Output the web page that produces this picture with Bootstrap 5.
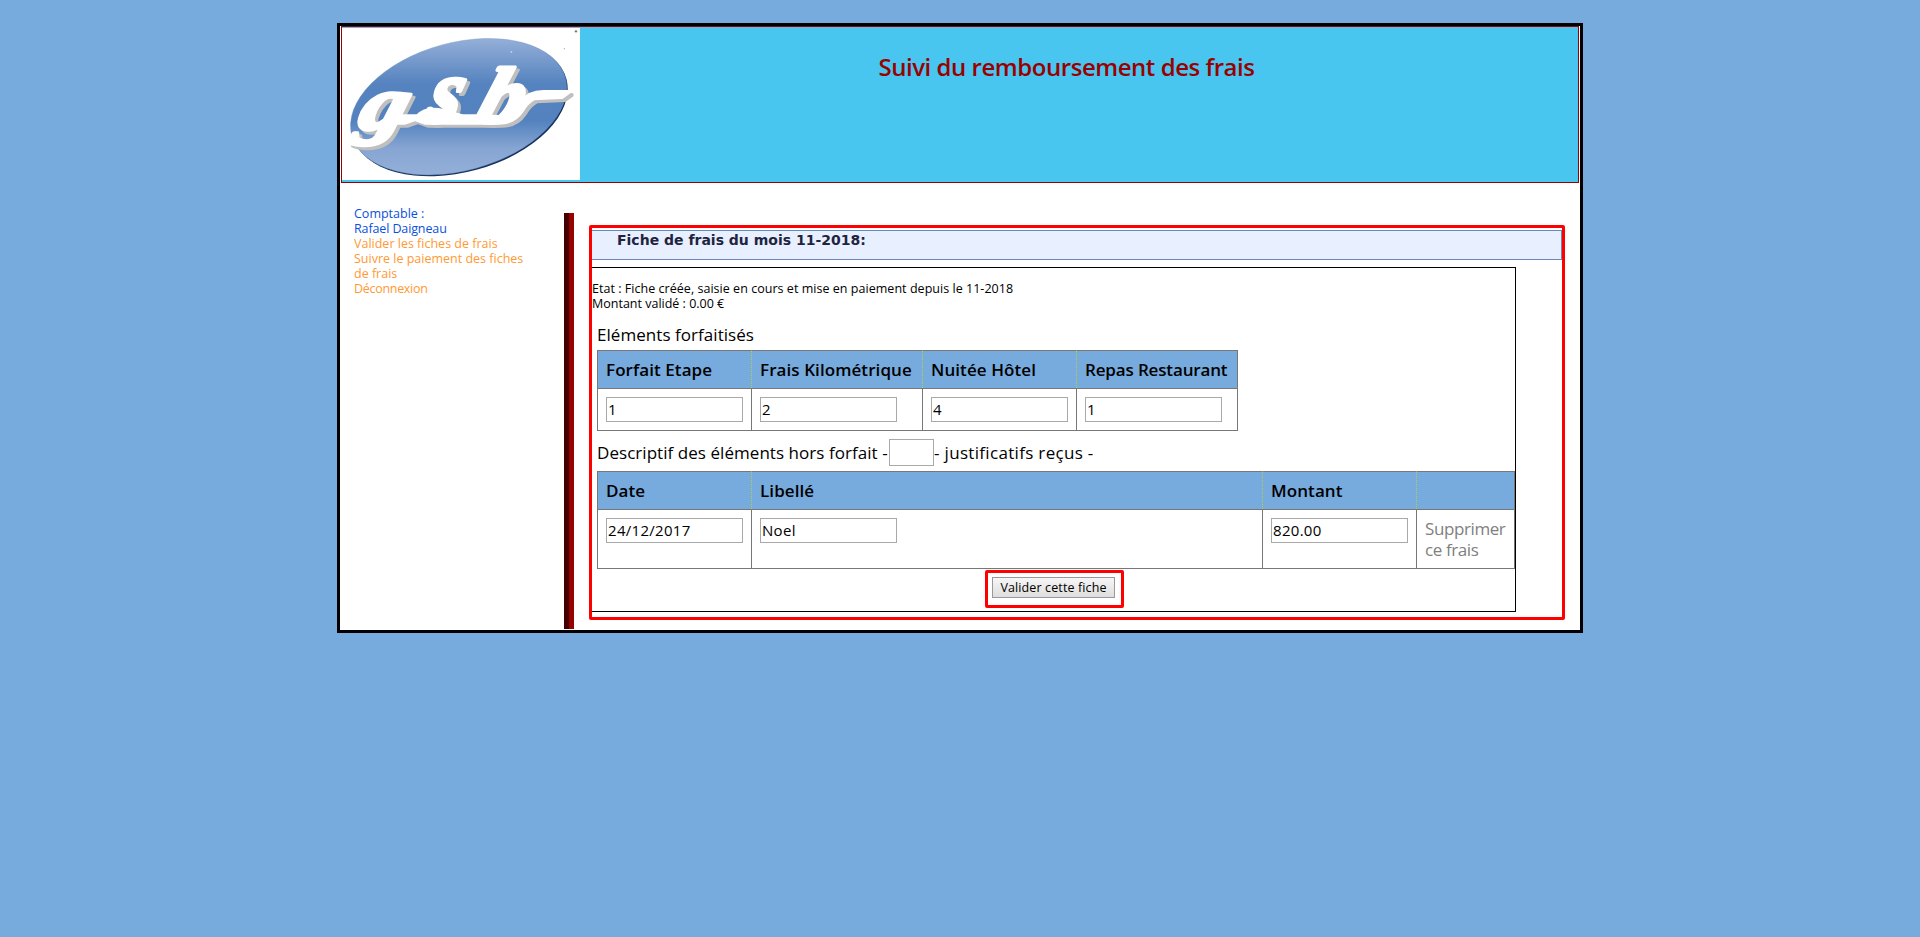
<!DOCTYPE html>
<html lang="fr">
<head>
<meta charset="utf-8">
<meta name="viewport" content="width=device-width, initial-scale=1">
<title>Suivi du remboursement des frais</title>
<link rel="stylesheet" href="https://cdn.jsdelivr.net/npm/bootstrap@5.3.0/dist/css/bootstrap.min.css">
<style>
  body { background: #77aadd; color: #000; font: 12.5px/15px "Open Sans", "Noto Sans", sans-serif; padding-top: 23px; }
  .page { width: 1246px; height: 610px; border: 3px solid #000; }
  .banner { height: 157px; margin: 0 1px; border: 1px solid #900; background: #48c6ef; }
  .logo { width: 238px; height: 152px; margin-top: 1px; }
  .banner h1 { margin: 25px 25px 0 0; font-size: 24px; line-height: 29px; font-weight: 600; letter-spacing: -.46px; color: #900; }
  .side { width: 210px; padding: 23px 30px 0 0; margin-left: 14px; color: #0a50dc; }
  .side a { color: #ff9933; }
  .divider { width: 10px; margin: 30px 15px 1px 0; background: linear-gradient(90deg, #430000 50%, #900 50%); }
  .framed { border: 3px solid #f00; border-radius: 2px; }
  .sheet { width: 976px; height: 395px; margin-top: 42px; }
  .sheet h2 { height: 30px; margin: 2px 0 7px; padding: 2px 0 0 25px; border: 1px solid #6b8abb; border-left: 0; background: #e8f0ff; color: #1f2440; font: bold 14px/15px "DejaVu Sans", sans-serif; }
  .panel { width: 924px; height: 345px; border: 1px solid #000; border-left: 0; padding-top: 13px; }
  .heading { font-size: 17px; margin-left: 5px; letter-spacing: .05px; }
  .grid { table-layout: fixed; border-collapse: separate; border-spacing: 0; margin-left: 5px; font-size: 17px; line-height: 21px; }
  .grid th { height: 38px; padding: 0 0 0 8px; font-weight: 600; letter-spacing: .08px; background: #77aadd; border-top: 1px solid #777; border-left: 1px dotted #b5cc46; white-space: nowrap; }
  .grid th:first-child { border-left: 1px solid #777; }
  .grid td { padding: 8px 0 8px 8px; vertical-align: top; border: 1px solid #777; border-right: 0; }
  .grid th:last-child, .grid td:last-child { border-right: 1px solid #777; }
  .grid input, .count { display: block; width: 137px; height: 25px; padding: 0 1px 2px; border: 1px solid #a9a9a9; background: #fff; color: #000; font-size: 15px; line-height: 21px; }
  .grid input { letter-spacing: .3px; }
  .tall td { height: 60px; padding-bottom: 0; }
  .count { width: 45px; height: 27px; }
  .submit { width: 139px; height: 38px; margin: 1px 0 0 393px; padding: 4px; }
  .submit button { display: block; width: 123px; height: 21px; padding: 0; border: 1px solid #999; background: linear-gradient(#f6f6f6, #dedede); color: #000; font-size: 12.5px; line-height: 18px; letter-spacing: .12px; }
</style>
</head>
<body>
<div class="page bg-white mx-auto">
  <header class="banner d-flex align-items-start">
    <svg class="logo flex-shrink-0" viewBox="36 39 714 456" preserveAspectRatio="none" role="img" aria-label="gsb">
      <defs>
        <linearGradient id="sky" gradientUnits="userSpaceOnUse" x1="386" y1="70" x2="386" y2="482" gradientTransform="rotate(15.2 386 276)">
          <stop offset="0" stop-color="#95afd8"/><stop offset=".33" stop-color="#5583bf"/><stop offset=".6" stop-color="#5382bf"/><stop offset=".8" stop-color="#86a5d2"/><stop offset="1" stop-color="#94b0d9"/>
        </linearGradient>
        <g id="mark">
          <text transform="translate(78 343) skewX(-16)" font-size="228" textLength="140" lengthAdjust="spacingAndGlyphs">g</text>
          <text transform="translate(280 322) skewX(-16)" font-size="275" textLength="98" lengthAdjust="spacingAndGlyphs">s</text>
          <text transform="translate(432 322) skewX(-18)" font-size="236" textLength="130" lengthAdjust="spacingAndGlyphs">b</text>
          <path d="M198 304H262Q285 280 325 285L400 304H440L510 306Q560 300 575 262Q596 231 640 231H716L695 246L612 250Q590 262 575 288Q550 326 500 323H285L255 312L225 323H186Z"/>
        </g>
      </defs>
      <path fill="#fff" d="M36 39H750V495H36Z"/>
      <ellipse cx="388" cy="279" rx="332" ry="193" transform="rotate(-15.2 386 276)" fill="#14305f"/>
      <ellipse cx="386" cy="275" rx="332" ry="192" transform="rotate(-15.2 386 276)" fill="url(#sky)" stroke="#6f8fbd" stroke-width="1"/>
      <g font-family="Liberation Serif, serif" font-weight="700" font-style="italic" stroke-width="12" stroke-linejoin="round">
        <use href="#mark" x="9" y="9" fill="#bfbfbf" stroke="#bfbfbf"/>
        <use href="#mark" fill="#fff" stroke="#fff"/>
      </g>
      <circle cx="738" cy="49" r="3.5" fill="#777"/><circle cx="703" cy="101" r="2" fill="#aaa"/><circle cx="544" cy="111" r="3" fill="#b8cdea"/>
    </svg>
    <h1 class="flex-grow-1 text-center">Suivi du remboursement des frais</h1>
  </header>
  <div class="d-flex" style="height:447px">
    <nav class="side flex-shrink-0">
      <div>Comptable :</div>
      <div style="letter-spacing:-.12px">Rafael Daigneau</div>
      <a class="d-block text-decoration-none" href="#">Valider les fiches de frais</a>
      <a class="d-block text-decoration-none" href="#">Suivre le paiement des fiches de frais</a>
      <a class="d-block text-decoration-none" href="#" style="letter-spacing:-.3px">Déconnexion</a>
    </nav>
    <div class="divider flex-shrink-0"></div>
    <main class="sheet framed flex-shrink-0">
      <h2>Fiche de frais du mois 11-2018:</h2>
      <form class="panel">
        <div style="letter-spacing:.035px">Etat : Fiche créée, saisie en cours et mise en paiement depuis le 11-2018</div>
        <div>Montant validé : 0.00 €</div>
        <div class="heading" style="padding-top:8px;line-height:31px">Eléments forfaitisés</div>
        <table class="grid" style="width:641px">
          <colgroup><col style="width:154px"><col style="width:171px"><col style="width:154px"><col style="width:162px"></colgroup>
          <tr><th>Forfait Etape</th><th>Frais Kilométrique</th><th>Nuitée Hôtel</th><th style="letter-spacing:-.15px">Repas Restaurant</th></tr>
          <tr><td><input value="1"></td><td><input value="2"></td><td><input value="4"></td><td><input value="1"></td></tr>
        </table>
        <div class="heading d-flex align-items-center" style="height:40px;padding-top:3px">
          <span style="width:292px">Descriptif des éléments hors forfait -</span><input class="count" aria-label="justificatifs"><span style="letter-spacing:.32px">- justificatifs reçus -</span>
        </div>
        <table class="grid" style="width:918px">
          <colgroup><col style="width:154px"><col style="width:511px"><col style="width:154px"><col style="width:99px"></colgroup>
          <tr><th>Date</th><th>Libellé</th><th>Montant</th><th></th></tr>
          <tr class="tall"><td><input value="24/12/2017"></td><td><input value="Noel"></td><td><input value="820.00"></td><td style="color:#808080;letter-spacing:-.4px">Supprimer<br>ce frais</td></tr>
        </table>
        <div class="submit framed"><button type="button">Valider cette fiche</button></div>
      </form>
    </main>
  </div>
</div>
<script src="https://cdn.jsdelivr.net/npm/bootstrap@5.3.0/dist/js/bootstrap.bundle.min.js"></script>
</body>
</html>
